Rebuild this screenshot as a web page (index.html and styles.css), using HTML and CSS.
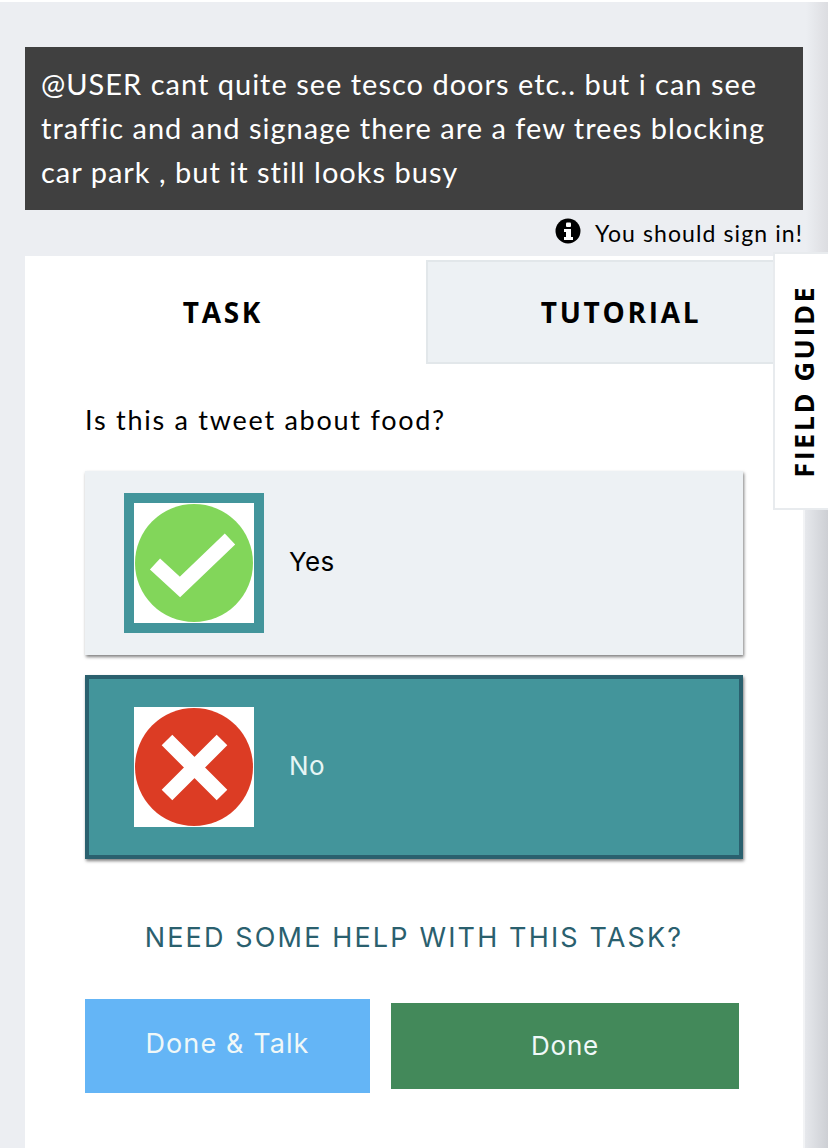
FILE: index.html
```html
<!DOCTYPE html>
<html lang="en">
<head>
<meta charset="utf-8">
<title>Classify</title>
<link rel="stylesheet" href="styles.css">
</head>
<body>
<div class="page">
  <div class="subject">@USER cant quite see tesco doors etc.. but i can see traffic and and signage there are a few trees blocking car park , but it still looks busy</div>
  <div class="signin">
    <svg class="info" viewBox="0 0 26 26" width="26" height="26"><circle cx="13" cy="13" r="12.5" fill="#000"/><rect x="11" y="4.5" width="5" height="4.5" rx="1" fill="#fff"/><path d="M9 11h7v8h2v3H9v-3h2v-5H9z" fill="#fff"/></svg>
    <span>You should sign in!</span>
  </div>
  <main class="card">
    <div class="tabs">
      <div class="tab active">TASK</div>
      <div class="tab">TUTORIAL</div>
    </div>
    <div class="task">
      <p class="question">Is this a tweet about food?</p>
      <div class="answer">
        <div class="thumb selected">
          <svg viewBox="0 0 120 120" width="120" height="120"><rect width="120" height="120" fill="#fff"/><circle cx="60" cy="60" r="59" fill="#82d65a"/><path d="M21 61L46 84L96 36" fill="none" stroke="#fff" stroke-width="15"/></svg>
        </div>
        <span>Yes</span>
      </div>
      <div class="answer chosen">
        <div class="thumb">
          <svg viewBox="0 0 120 120" width="120" height="120"><rect width="120" height="120" fill="#fff"/><circle cx="60" cy="60" r="59" fill="#dc3c24"/><path d="M33 33L88 88M88 33L33 88" fill="none" stroke="#fff" stroke-width="15"/></svg>
        </div>
        <span>No</span>
      </div>
      <div class="help">NEED SOME HELP WITH THIS TASK?</div>
      <div class="actions">
        <button class="btn talk">Done &amp; Talk</button>
        <button class="btn done">Done</button>
      </div>
    </div>
  </main>
  <aside class="guide"><span>FIELD GUIDE</span></aside>
</div>
</body>
</html>
```
FILE: styles.css
```css
* { box-sizing: border-box; }
html, body { margin: 0; height: 100%; }
body { background: #fff; overflow: hidden; }
.page {
  position: relative;
  height: 1148px;
  margin-top: 2px;
  padding: 45px 25px 0;
  background:
    linear-gradient(to right, #eceef2 806px, #dcdde1 828px) 0 0 / 100% 250px no-repeat,
    linear-gradient(to right, #eceef2 803px, #f2f3f5 803px, #f2f3f5 805px, #e6e8ec 805px, #cdcfd4 828px);
  font-family: Lato, "Liberation Sans", sans-serif;
  display: flex;
  flex-direction: column;
  overflow: hidden;
}
.subject {
  background: #404040;
  color: #fff;
  padding: 15px 16px;
  height: 163px;
  font-size: 29px;
  line-height: 44px;
  letter-spacing: 1px;
}
.signin {
  height: 46px;
  display: flex;
  justify-content: flex-end;
  align-items: center;
  gap: 14px;
  font-size: 23px;
  letter-spacing: 1.1px;
  color: #000;
}
.signin .info { margin-bottom: 4px; }
.card { background: #fff; flex: 1; }
.tabs { display: flex; height: 108px; align-items: flex-start; }
.tab {
  font-family: "Open Sans", sans-serif;
  font-weight: 700;
  font-size: 28px;
  letter-spacing: 2.7px;
  text-align: center;
  height: 104px;
  margin-top: 4px;
  line-height: 100px;
  flex: 0 0 388px;
  background: #edf1f4;
  border: 2px solid #e2e7ea;
  border-right: 0;
}
.tab.active { flex: 0 0 401px; background: #fff; border: 0; padding-right: 5px; line-height: 104px; }
.task { padding: 38px 60px 0; font-family: Inter, sans-serif; }
.question {
  margin: 0 0 33px;
  font-family: Lato, sans-serif;
  font-size: 27px;
  line-height: 36px;
  letter-spacing: 1.74px;
}
.answer {
  width: 658px;
  height: 184px;
  display: flex;
  align-items: center;
  gap: 25px;
  padding-left: 39px;
  background: #edf1f4;
  box-shadow: 1px 2px 3px rgba(0,0,0,.5);
  font-size: 26px;
  letter-spacing: 0.4px;
  margin-bottom: 20px;
  color: #000;
}
.answer span { margin-bottom: 3px; }
.answer.chosen {
  background: #43959b;
  border: 4px solid #2a606e;
  color: #e6f5f5;
  padding-left: 35px;
}
.thumb { width: 140px; height: 140px; padding: 10px; flex: none; }
.thumb.selected { background: #43959b; }
.thumb svg { display: block; }
.help {
  margin-top: 61px;
  font-size: 27px;
  line-height: 36px;
  letter-spacing: 2.15px;
  text-align: center;
  color: #2a606e;
  width: 658px;
  font-weight: 400;
}
.actions { margin-top: 43px; display: flex; align-items: center; gap: 21px; }
.btn {
  border: 0;
  color: #f0f8f8;
  font-family: Inter, sans-serif;
  font-size: 26px;
  letter-spacing: 0.8px;
  font-weight: 400;
  padding: 0;
}
.talk { width: 285px; height: 94px; background: #64b5f6; font-size: 27px; letter-spacing: 1.1px; padding-bottom: 6px; }
.done { width: 348px; height: 86px; background: #43895a; padding-bottom: 2px; }
.guide {
  position: absolute;
  left: 773px;
  top: 250px;
  width: 55px;
  height: 258px;
  background: #fff;
  border: 2px solid #e8ebee;
  border-right: 0;
  display: flex;
  align-items: center;
  justify-content: center;
  padding-left: 3px;
}
.guide span {
  writing-mode: vertical-rl;
  transform: rotate(180deg);
  font-family: "Open Sans", sans-serif;
  font-weight: 700;
  font-size: 27px;
  letter-spacing: 2.5px;
  white-space: nowrap;
  color: #000;
}
```
